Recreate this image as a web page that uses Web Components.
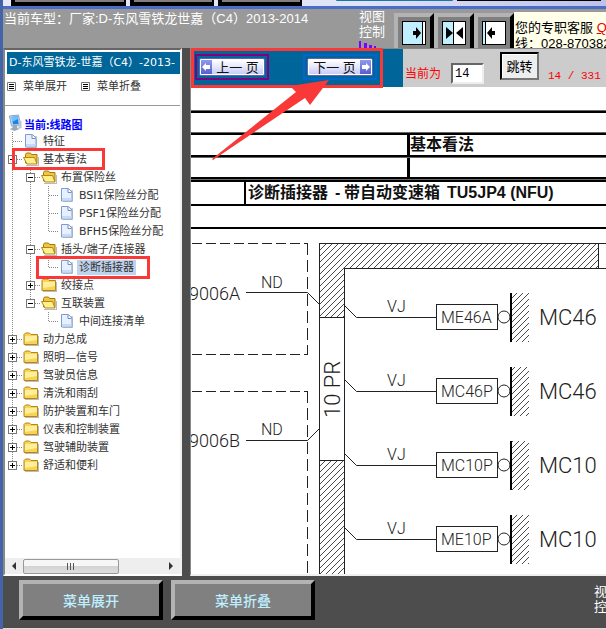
<!DOCTYPE html>
<html lang="zh-CN">
<head>
<meta charset="utf-8">
<title>线路图</title>
<style>
html, body { margin: 0; height: 100%; }
body { font: 13px/16px "Liberation Sans", "Noto Sans CJK SC", sans-serif; overflow: hidden; }
</style>
</head>
<body>
<wiring-app></wiring-app>
<script>
function define(name, html, setup) {
  const tpl = document.createElement('template');
  tpl.innerHTML = html;
  customElements.define(name, class extends HTMLElement {
    connectedCallback() {
      if (this.shadowRoot) return;
      this.attachShadow({ mode: 'open' }).append(tpl.content.cloneNode(true));
      if (setup) setup(this, this.shadowRoot);
    }
  });
}

/* Bevelled tabs cut off by the top of the window */
define('top-strip', `
<style>
:host { display: flex; gap: 4px; height: 6px; padding-left: 8px; background: linear-gradient(90deg, #e6eafa, #dfe3f6 60%, #bcc2ea); border-bottom: 3px solid #4a6ec8; overflow: hidden; }
i { flex: 0 0 auto; box-sizing: border-box; width: 115px; height: 6px; background: #808080; border: solid #000; border-width: 0 2px 4px 4px; }
i.short { width: 84px; }
i.blue { background: #1f73a8; border: 0; width: 117px; height: 1px; margin-left: 30px; border-radius: 0 0 4px 4px; }
i.dark { background: #000; border: 0; width: 144px; height: 1px; }
</style>
<i></i><i class="short"></i><i class="short"></i><i class="blue"></i><i class="dark"></i>`);

define('pane-button', `
<style>
:host { display: block; flex: 0 0 auto; }
button { display: flex; align-items: flex-start; box-sizing: border-box; width: 40px; height: 40px; padding: 4px 0 0 4px; background: #808080; border: 4px solid; border-color: #b3b3b3 #000 #000 #b3b3b3; }
svg { display: block; }
</style>
<button type="button"><svg width="24" height="24"></svg></button>`, (host, root) => {
  const art = {
    right: '<rect width="24" height="24"/><path fill="#c0efff" d="M1 1h19v22H1z"/><path fill="#fff" d="M21 1h2v22h-2z"/><path d="M11 10h3V6l5 6-5 6v-4h-3z"/>',
    both: '<rect width="24" height="24"/><path fill="#c0efff" d="M1 1h10v22H1z"/><path fill="#fff" d="M12 1h11v22H12z"/><path d="M4 6l7 6-7 6zM21 6l-7 6 7 6z"/>',
    left: '<rect width="24" height="24"/><path fill="#c0efff" d="M1 1h2v22H1z"/><path fill="#fff" d="M4 1h19v22H4z"/><path d="M13 10h-3V6l-5 6 5 6v-4h3z"/>'
  };
  root.querySelector('svg').innerHTML = art[host.getAttribute('kind')];
  root.querySelector('button').setAttribute('aria-label', host.getAttribute('label'));
});

define('app-header', `
<style>
:host { display: flex; height: 39px; background: #999; color: #fff; overflow: hidden; }
.model { flex: 0 0 356px; padding-left: 1px; box-sizing: border-box; white-space: nowrap; line-height: 20px; }
.view { flex: 0 0 35px; line-height: 15px; }
.view svg { display: block; }
.nav { display: flex; padding-top: 4px; }
.help { flex: 1; min-width: 0; margin-top: 3px; padding: 8px 0 0 1px; background: #ffffea; color: #000; white-space: nowrap; overflow: hidden; }
a { color: #e00; }
</style>
<div class="model">当前车型：厂家:D-东风雪铁龙世嘉（C4）2013-2014</div>
<div class="view">视图<br>控制<svg width="20" height="9"><path fill="#8000ff" d="M0 2h2v7H0zM5 4h3v5H5zM10 6h3v3h-3zM15 7h2v2h-2z"/></svg></div>
<div class="nav"><pane-button kind="right" label="向右"></pane-button><pane-button kind="both" label="居中"></pane-button><pane-button kind="left" label="向左"></pane-button></div>
<div class="help">您的专职客服 <a href="#">Q</a><br>线：028-870382</div>`);

define('tree-item', `
<style>
:host { display: block; position: relative; --line: repeating-linear-gradient(#888 0 1px, transparent 1px 2px); }
.row { display: flex; align-items: center; height: 18px; position: relative; white-space: nowrap; }
.toggle { box-sizing: border-box; width: 9px; height: 9px; margin: 0; padding: 0; background: #fff; border: 1px solid #777; flex: none; position: relative; }
.toggle::before, .toggle.plus::after { content: ""; position: absolute; left: 1px; top: 3px; width: 5px; height: 1px; background: #000; }
.toggle.plus::after { left: 3px; top: 1px; width: 1px; height: 5px; }
.stub { width: 6px; height: 1px; background: repeating-linear-gradient(90deg, #888 0 1px, transparent 1px 2px); flex: none; }
.leaf .stub { width: 10px; margin-left: 5px; }
svg { flex: none; margin-right: 3px; }
a { color: #333; text-decoration: none; padding: 0 1px; line-height: 15px; }
:host([selected]) a { background: #c0d2ee; padding: 0 2px; margin-left: -1px; }
.kids { padding-left: 18px; position: relative; }
:host([joined])::before { content: ""; position: absolute; left: 4px; top: 0; bottom: 0; width: 1px; background: var(--line); }
:host([joined="last"])::before { bottom: auto; height: 9px; }
:host([mark]) .row::after { content: ""; position: absolute; border: 3px solid #f93838; pointer-events: none; box-sizing: border-box; z-index: 2; }
:host([mark="folder"]) .row::after { left: 4px; top: -2px; width: 93px; height: 22px; }
:host([mark="page"]) .row::after { left: -8px; top: -2px; width: 114px; height: 23px; }
</style>
<div class="row"></div><div class="kids"><slot></slot></div>`, (host, root) => {
  const kind = host.getAttribute('kind');
  const label = host.getAttribute('label');
  const page = '<svg width="16" height="16" viewBox="0 0 16 16"><path d="M4 3h10v12H4z" fill="#999" opacity=".5"/><path d="M2.500 1.500h7l3.500 3.500v9H2.500z" fill="#e6f0ff" stroke="#7f9ccc"/><path d="M9 2v3.500h3.500" fill="#fff" stroke="#6f8fc0"/><path d="M3 11h9.500v2.500H3z" fill="#c6dafa"/></svg>';
  const closed = '<svg width="16" height="16" viewBox="0 0 16 16"><path d="M2 14h13V5h1v10H2z" fill="#bbb"/><path d="M1 3.500l1.500-1.500h4l1.500 1.500h6.500v10H1z" fill="#f7d452" stroke="#b3851a"/><path d="M2 5h12v4L2 11z" fill="#ffef9c"/></svg>';
  const open = '<svg width="16" height="16" viewBox="0 0 16 16"><path d="M3 14h12V6h1v9H3z" fill="#bbb"/><path d="M2.500 12V3.500l1-1.500h4l1 1.500h5.500v9z" fill="#eec63f" stroke="#a5780f"/><path d="M.5 6.500h11l2.500 6.500H4z" fill="#fff08c" stroke="#b3851a"/></svg>';
  const head = kind === 'page'
    ? '<span class="stub"></span>' + page
    : `<button type="button" class="toggle ${kind === 'closed' ? 'plus' : 'minus'}" aria-label="${label}"></button><span class="stub"></span>` + (kind === 'closed' ? closed : open);
  const row = root.querySelector('.row');
  if (kind === 'page') row.classList.add('leaf');
  row.innerHTML = head + `<a href="#">${label}</a>`;
});

define('menu-tree', `
<style>
:host { display: block; padding: 0 0 0 2px; font: 11px/18px "DejaVu Sans", "Noto Sans CJK SC", sans-serif; }
.root { display: flex; align-items: center; height: 18px; font: bold 11px/18px "Noto Sans CJK SC", sans-serif; color: #00f; white-space: nowrap; }
.root span { padding-top: 1px; }
nav { padding-left: 1px; }
</style>
<div class="root"><svg width="17" height="18" viewBox="0 0 16 18"><path d="M2 2l9-1 2 10-9 1z" fill="#c8dcf2" stroke="#8aa5c8"/><path d="M4 3l6-1 1.500 8-6 .5z" fill="#1b83e8"/><path d="M4 3l6-1 .5 3-6 3z" fill="#71c1ff"/><path d="M5 12l4-1 1 3 2 1-5 2-5-2 3-1z" fill="#9aa9b9"/><path d="M11 6l3 1v7l-3 1z" fill="#b9c6d4"/></svg><span>当前:线路图</span></div>
<nav>
<tree-item kind="page" label="特征" joined></tree-item>
<tree-item kind="open" label="基本看法" joined mark="folder">
  <tree-item kind="open" label="布置保险丝" joined>
    <tree-item kind="page" label="BSI1保险丝分配" joined></tree-item>
    <tree-item kind="page" label="PSF1保险丝分配" joined></tree-item>
    <tree-item kind="page" label="BFH5保险丝分配" joined="last"></tree-item>
  </tree-item>
  <tree-item kind="open" label="插头/端子/连接器" joined>
    <tree-item kind="page" label="诊断插接器" joined="last" selected mark="page"></tree-item>
  </tree-item>
  <tree-item kind="closed" label="绞接点" joined></tree-item>
  <tree-item kind="open" label="互联装置" joined="last">
    <tree-item kind="page" label="中间连接清单" joined="last"></tree-item>
  </tree-item>
</tree-item>
<tree-item kind="closed" label="动力总成" joined></tree-item>
<tree-item kind="closed" label="照明—信号" joined></tree-item>
<tree-item kind="closed" label="驾驶员信息" joined></tree-item>
<tree-item kind="closed" label="清洗和雨刮" joined></tree-item>
<tree-item kind="closed" label="防护装置和车门" joined></tree-item>
<tree-item kind="closed" label="仪表和控制装置" joined></tree-item>
<tree-item kind="closed" label="驾驶辅助装置" joined></tree-item>
<tree-item kind="closed" label="舒适和便利" joined="last"></tree-item>
</nav>`);

define('side-pane', `
<style>
:host { display: flex; flex-direction: column; box-sizing: border-box; background: #fff; border: solid; border-width: 2px; border-color: #666 #f0f0f0 #fff #888; overflow: hidden; font: 11px/18px "DejaVu Sans", "Noto Sans CJK SC", sans-serif; }
h1 { margin: 2px 0 0 2px; padding-left: 2px; height: 22px; background: #069; color: #fff; font: inherit; line-height: 21px; white-space: nowrap; overflow: hidden; }
.tools { display: flex; gap: 14px; padding: 0 0 5px 2px; align-items: center; border-bottom: 1px solid #999; box-sizing: border-box; height: 32px; }
.tools button { display: flex; align-items: center; gap: 6px; margin: 0; padding: 0; border: 0; background: none; font: inherit; color: #333; white-space: nowrap; }
menu-tree { flex: 1; padding-top: 8px; min-height: 0; }
.scroll { display: flex; align-items: center; height: 16px; background: #eee; }
.scroll button { border: 0; padding: 0; margin: 0; background: none; width: 18px; height: 16px; }
.scroll svg { display: block; margin: auto; }
.track { flex: 1; display: flex; }
.thumb { box-sizing: border-box; width: 69%; height: 15px; border: 1px solid #999; border-radius: 2px; background: linear-gradient(#f6f6f6 50%, #d3d3d3 50%, #dedede); display: grid; place-items: center; }
</style>
<h1>D-东风雪铁龙-世嘉（C4）-2013-</h1>
<div class="tools">
<button type="button"><svg width="10" height="10"><path fill="#fff" stroke="#777" d="M.5.5h8v8h-8z"/><path stroke="#000" d="M2 2.500h5M2 4.500h5M2 6.500h5"/></svg>菜单展开</button>
<button type="button"><svg width="10" height="10"><path fill="#fff" stroke="#777" d="M.5.5h8v8h-8z"/><path stroke="#000" d="M2 2.500h5M2 4.500h5M2 6.500h5"/></svg>菜单折叠</button>
</div>
<menu-tree></menu-tree>
<div class="scroll"><button type="button" aria-label="向左滚动"><svg width="4" height="8"><path d="M4 0v8L0 4z" fill="#333"/></svg></button><div class="track"><div class="thumb"><svg width="9" height="7"><path stroke="#555" d="M1.500 0v7M4.500 0v7M7.500 0v7"/></svg></div></div><button type="button" aria-label="向右滚动"><svg width="4" height="8"><path d="M0 0v8l4-4z" fill="#333"/></svg></button></div>`);

define('page-button', `
<style>
:host { display: flex; box-sizing: border-box; width: 74px; height: 26px; padding: 2px; border: 2px solid #800080; }
:host([dir="next"]) { border-color: #06c; }
button { display: flex; align-items: stretch; flex: 1; box-sizing: border-box; min-width: 0; margin: 0; padding: 1px; border: 1px solid #5f63b8; border-radius: 2px; background: #fff; font: 13px/16px "Liberation Sans", "Noto Sans CJK SC", sans-serif; color: #111; }
span { flex: 1; background: linear-gradient(#fff, #c9ccf6); white-space: nowrap; line-height: 16px; }
i { flex: 0 0 11px; display: grid; place-items: center; background: linear-gradient(#8f9aec, #5560cf); }
:host([dir="next"]) button { flex-direction: row-reverse; }
:host([dir="next"]) svg { transform: rotate(180deg); }
</style>
<button type="button"><i><svg width="9" height="8"><path fill="#fff" d="M0 4l4-4v2h4v4H4v2z"/></svg></i><span><slot></slot></span></button>`);

define('page-bar', `
<style>
:host { display: flex; height: 38px; background: #ccc; color: #f00; font: 12px/16px "Liberation Mono", "Noto Sans CJK SC", monospace; }
.turn { position: relative; box-sizing: border-box; flex: 0 0 212px; display: flex; gap: 34px; padding: 5px 0 0 4px; background: #069; }
.turn::after { content: ""; position: absolute; left: 0; top: -1px; width: 192px; height: 40px; box-sizing: border-box; border: 3px solid #f93838; pointer-events: none; z-index: 1; }
label { display: flex; align-items: flex-start; gap: 10px; padding-left: 2px; white-space: nowrap; }
label span { padding-top: 18px; }
input { box-sizing: border-box; width: 33px; height: 21px; margin: 14px 0 0; padding: 0 2px; border: 2px solid; border-color: #666 #eee #eee #666; background: #fff; font: inherit; color: #000; }
.jump { box-sizing: border-box; width: 39px; height: 28px; margin: 3px 0 0 16px; padding: 0; border: 2px solid; border-color: #000 #777 #777 #000; background: #eee; box-shadow: inset 1px 1px #fff; font: 13px/16px "Noto Sans CJK SC", sans-serif; color: #000; flex: none; }
output { padding: 19px 0 0 9px; font-size: 11px; white-space: nowrap; }
</style>
<div class="turn"><page-button dir="prev">上一 页</page-button><page-button dir="next">下一 页</page-button></div>
<label><span>当前为</span><input type="text" value="14"></label>
<button type="button" class="jump">跳转</button>
<output>14 / 331</output>`);

/* Coordinates inside the group are those of the window */
define('wiring-diagram', `
<style>
:host { display: block; position: relative; overflow: hidden; background: #fff; }
svg { display: block; width: 100%; height: 100%; position: absolute; inset: 0; }
.t { font: bold 16px "Liberation Sans", "Noto Sans CJK SC", sans-serif; fill: #111; }
.s { font: 300 16px Roboto, sans-serif; fill: #222; }
.m { font-size: 18px; } .l { font-size: 22px; }
.w { fill: none; stroke: #222; stroke-width: 1; shape-rendering: crispEdges; }
.d { fill: none; stroke: #222; stroke-width: 1; }
</style>
<svg><defs>
<pattern id="h" width="6" height="6" patternUnits="userSpaceOnUse"><path d="M-1 7L7-1M-1 1L1-1M5 7L7 5" stroke="#333" stroke-width=".9"/></pattern>
</defs><g id="g" transform="translate(-191 -87)"></g></svg>`, (host, root) => {
  const rows = [['ME46A', 'MC46'], ['MC46P', 'MC46'], ['MC10P', 'MC10'], ['ME10P', 'MC10']];
  let out = `
<g shape-rendering="crispEdges">
<path d="M190 111h2000v2H190zM190 133h2000v2H190zM190 155h2000v2H190zM190 177h2000v5H190zM190 204h2000v2H190zM190 227h2000v2H190zM407 134h3v44h-3zM244 181h2v24h-2z"/>
<path fill="#666" d="M190 110h2000v1H190zM190 132h2000v1H190zM190 157h2000v1H190zM190 179h2000v1H190z"/>
</g>
<text class="t" x="410" y="150">基本看法</text>
<text class="t" x="248" y="198">诊断插接器</text><text class="t" x="335" y="198">-</text><text class="t" x="344" y="198">带自动变速箱</text><text class="t" x="447" y="198">TU5JP4 (NFU)</text>
<path fill="url(#h)" d="M319 243h279v25H345v49h-26zM319 461h25v800h-25z"/>
<path class="w" d="M319.500 243.500H2200M344.500 268.500H2200M598.500 243v25M319.500 243v1200M344.500 268v1200M319 317.500h26M319 460.500h26"/>
<path class="w" stroke-dasharray="10 4" d="M192 243.500h116M192 354.500h116M192 391.500h116"/>
<path class="w" stroke-dasharray="12 5" d="M307.500 243v112M307.500 391v1000"/>
<path class="d" d="M246 292.500h61.500l12 12M246 440.500h61.500l12-12"/>
<text class="s m" x="189" y="300">9006A</text><text class="s m" x="189" y="447">9006B</text>
<text class="s" x="261" y="288">ND</text><text class="s" x="261" y="435">ND</text>
<text class="s l" transform="translate(340 418) rotate(-90)">10 PR</text>`;
  rows.forEach(([pin, net], i) => {
    const y = 317 + i * 74;
    out += `<path class="d" d="M344.500 ${y - 12}.500l12 12H436"/>
<text class="s" x="387" y="${y - 5}">VJ</text>
<rect class="w" x="436.500" y="${y - 13}.500" width="61" height="25"/>
<text class="s" x="441" y="${y + 6}">${pin}</text>
<circle class="d" cx="504" cy="${y}" r="6"/>
<path fill="url(#h)" d="M511 ${y - 24}h18v49h-18z"/><path d="M510 ${y - 24}h2v49h-2z"/>
<text class="s l" x="539" y="${y + 8}">${net}</text>`;
  });
  root.getElementById('g').innerHTML = out;
});

define('drawing-pane', `
<style>
:host { display: flex; flex-direction: column; position: relative; box-sizing: border-box; border: solid #888; border-width: 1px 0 2px 1px; border-bottom-color: #f0f0f0; min-width: 0; }
wiring-diagram { flex: 1; }
.arrow { position: absolute; left: 20px; top: 31px; pointer-events: none; z-index: 2; }
</style>
<page-bar></page-bar>
<wiring-diagram></wiring-diagram>
<svg class="arrow" width="120" height="84"><path fill="#f93838" d="M118 0L99 25 94 18 2 80 1 79 85 12 79 6z"/></svg>`);

define('menu-button', `
<style>
:host { display: block; flex: 0 0 144px; }
button { display: block; box-sizing: border-box; width: 100%; height: 40px; margin: 0; padding: 0; background: #808080; border: 4px solid; border-color: #b3b3b3 #000 #000 #b3b3b3; color: #bdefff; font: 500 14px/20px "Noto Sans CJK SC", sans-serif; }
</style>
<button type="button"><slot></slot></button>`);

define('app-footer', `
<style>
:host { display: flex; gap: 8px; box-sizing: border-box; height: 53px; padding: 4px 0 0 16px; background: #4d4d4d; overflow: hidden; border-bottom: 1px solid #ddd; }
.view { margin-left: auto; flex: 0 0 12px; overflow: hidden; color: #fff; line-height: 15px; white-space: nowrap; padding-top: 4px; }
</style>
<menu-button>菜单展开</menu-button><menu-button>菜单折叠</menu-button><div class="view">视<br>控</div>`);

define('wiring-app', `
<style>
:host { display: grid; grid-template-rows: auto auto 1fr auto; height: 100vh; box-sizing: border-box; border-left: 3px solid #4464a8; }
main { display: grid; grid-template-columns: 179px 1fr; gap: 8px; min-height: 0; background: #4d4d4d; }
</style>
<top-strip></top-strip><app-header></app-header>
<main><side-pane></side-pane><drawing-pane></drawing-pane></main>
<app-footer></app-footer>`);
</script>
</body>
</html>
